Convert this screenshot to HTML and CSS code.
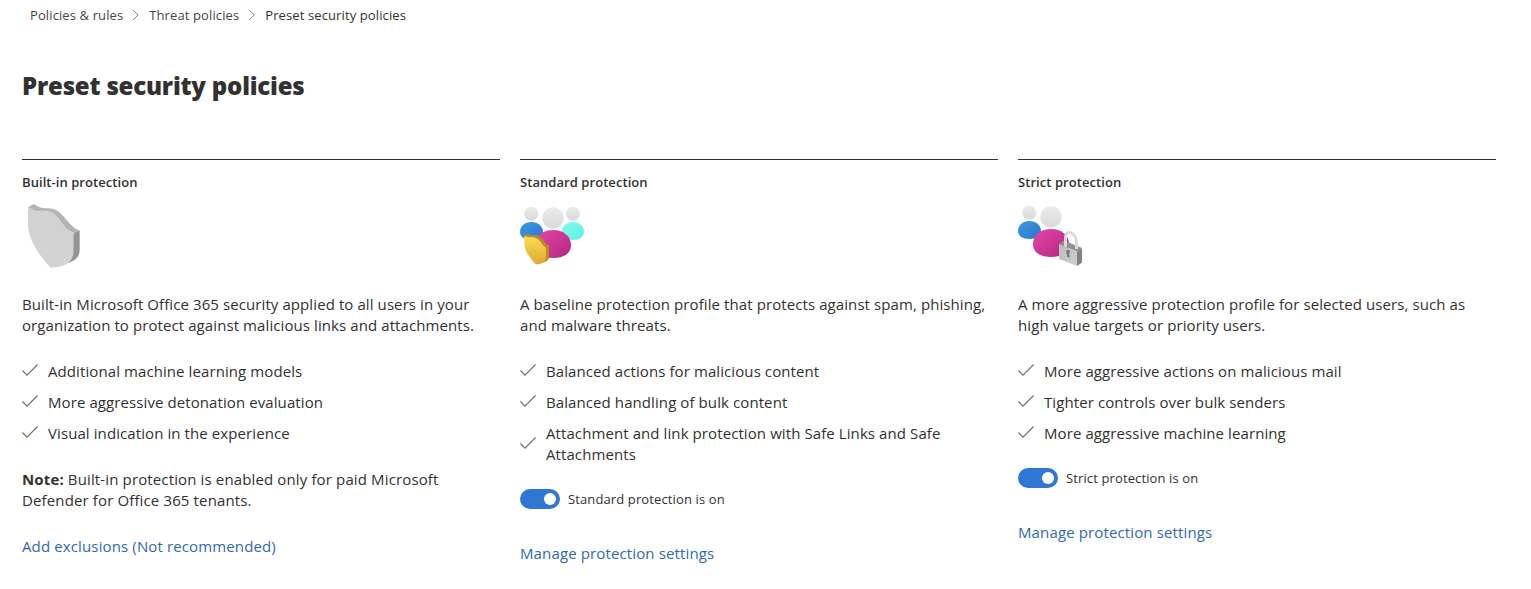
FILE: index.html
```
<!DOCTYPE html>
<html lang="en">
<head>
<meta charset="utf-8">
<title>Preset security policies</title>
<link rel="stylesheet" href="styles.css">
</head>
<body>
<svg class="defs" width="0" height="0" aria-hidden="true">
  <defs>
    <linearGradient id="head" x1="0" y1="0" x2="0" y2="1"><stop offset="0" stop-color="#ebebeb"/><stop offset="1" stop-color="#d9d9d9"/></linearGradient>
    <linearGradient id="blue" x1="0" y1="0" x2="1" y2="1"><stop offset="0" stop-color="#3c9ae4"/><stop offset="1" stop-color="#2b74c9"/></linearGradient>
    <linearGradient id="pink" x1="0" y1="0" x2="1" y2="1"><stop offset="0" stop-color="#e646a6"/><stop offset="1" stop-color="#b02780"/></linearGradient>
    <linearGradient id="teal" x1="0" y1="0" x2="1" y2="1"><stop offset="0" stop-color="#82fbee"/><stop offset="1" stop-color="#5feee0"/></linearGradient>
    <linearGradient id="gold" x1="0" y1="0" x2="0" y2="1"><stop offset="0" stop-color="#fbdf58"/><stop offset="1" stop-color="#e2a733"/></linearGradient>
    <linearGradient id="steel" x1="0" y1="0" x2="1" y2="1"><stop offset="0" stop-color="#bcbcbc"/><stop offset="1" stop-color="#cecece"/></linearGradient>
    <symbol id="check" viewBox="0 0 16 16"><path d="M.4 8.500 5 13.100 15.600 2.500" fill="none" stroke="#5f7656" stroke-width="1.100"/></symbol>
    <symbol id="chevron" viewBox="0 0 8 12"><path d="M1.200 1.200 6.200 6 1.200 10.800" fill="none" stroke="#85827f" stroke-width="1"/></symbol>
  </defs>
</svg>
<nav class="breadcrumb">
  <a>Policies &amp; rules</a>
  <svg class="chevron"><use href="#chevron"/></svg>
  <a>Threat policies</a>
  <svg class="chevron"><use href="#chevron"/></svg>
  <span class="current">Preset security policies</span>
</nav>
<h1 class="title">Preset security policies</h1>
<main class="columns">
  <section class="card">
    <h2 class="card-title">Built-in protection</h2>
    <svg class="picture" viewBox="0 0 64 64">
      <path d="M6 3.300 12 0C16 3 20 4.500 25 4.200 41 3.500 43 20 57.700 26.700L51.500 29 22 12Z" fill="#b4b4b4"/>
      <path d="M51.500 29 57.700 26.500V44C57.700 53 54 56 46 59Z" fill="#949494"/>
      <path d="M6 3.300C10 6.500 15 7.200 20 6.500 38 5 38 23 51.500 29V47C51.500 58 44 63 28.500 63.800 17 51 6 36 6 19Z" fill="#d2d2d2"/>
    </svg>
    <p class="text">Built-in Microsoft Office 365 security applied to all users in your<br>organization to protect against malicious links and attachments.</p>
    <ul class="features">
      <li><svg class="check"><use href="#check"/></svg><span>Additional machine learning models</span></li>
      <li><svg class="check"><use href="#check"/></svg><span>More aggressive detonation evaluation</span></li>
      <li><svg class="check"><use href="#check"/></svg><span>Visual indication in the experience</span></li>
    </ul>
    <p class="text note"><b>Note:</b> Built-in protection is enabled only for paid Microsoft<br>Defender for Office 365 tenants.</p>
    <a class="link">Add exclusions (Not recommended)</a>
  </section>
  <section class="card">
    <h2 class="card-title">Standard protection</h2>
    <svg class="picture" viewBox="0 0 64 64">
      <circle cx="11.300" cy="9.700" r="7" fill="url(#head)"/>
      <circle cx="53" cy="9.700" r="7" fill="url(#head)"/>
      <path d="M0 28C0 22 5 18 11.300 18S23 22 23 28C23 33 18 36 11.500 36S0 33 0 28Z" fill="url(#blue)"/>
      <path d="M41.500 28C41.500 22 47 18 53 18S64 22 64 28C64 33 59 36 53 36S41.500 33 41.500 28Z" fill="url(#teal)"/>
      <circle cx="33" cy="14" r="10.700" fill="url(#head)"/>
      <path d="M15.500 41C15.500 32 23 26 33 26S51 32 51 41C51 50 43 54 33.500 54S15.500 50 15.500 41Z" fill="url(#pink)"/>
      <path d="M4.300 31.500 7 29.700C10 32 14 31 17 31.500 23 33 24 39.500 29 41.700V53C29 57 25 58 18 60Z" fill="#bf8a24"/>
      <path d="M4.300 31.500C7 33.500 10 33.200 13 33.200 20 33.500 21 41 26 43.500V52C26 58 22 60 15.800 60.500 10 54 4.300 47 4.300 39Z" fill="url(#gold)"/>
    </svg>
    <p class="text">A baseline protection profile that protects against spam, phishing,<br>and malware threats.</p>
    <ul class="features">
      <li><svg class="check"><use href="#check"/></svg><span>Balanced actions for malicious content</span></li>
      <li><svg class="check"><use href="#check"/></svg><span>Balanced handling of bulk content</span></li>
      <li><svg class="check"><use href="#check"/></svg><span>Attachment and link protection with Safe Links and Safe<br>Attachments</span></li>
    </ul>
    <div class="toggle-row"><span class="toggle"></span><span class="toggle-label">Standard protection is on</span></div>
    <a class="link">Manage protection settings</a>
  </section>
  <section class="card">
    <h2 class="card-title">Strict protection</h2>
    <svg class="picture" viewBox="0 0 64 64">
      <circle cx="11.300" cy="8.700" r="7" fill="url(#head)"/>
      <path d="M0 27C0 21 5 17 11.300 17S23 21 23 27C23 32 18 35 11.500 35S0 32 0 27Z" fill="url(#blue)"/>
      <circle cx="33" cy="13" r="10.700" fill="url(#head)"/>
      <path d="M15 40C15 31 23 25 33 25S51 31 51 40C51 49 43 53 33 53S15 49 15 40Z" fill="url(#pink)"/>
      <path d="M41 40 46 36.500 64 44 59 47.500Z" fill="#929292"/>
      <path d="M47.500 43V35C47.500 30 49 28.500 51 28.500 55 28.500 58.500 33 58.500 38V45" fill="none" stroke="#dadada" stroke-width="3"/>
      <path d="M41 40 59 47.500V62L41 55Z" fill="url(#steel)"/>
      <path d="M59 47.500 64 44V58.500L59 62Z" fill="#818181"/>
      <ellipse cx="50" cy="48" rx="1.800" ry="2.200" fill="#777"/>
      <path d="M49.300 49H50.900L51.800 53.800 48.900 52.600Z" fill="#777"/>
    </svg>
    <p class="text">A more aggressive protection profile for selected users, such as<br>high value targets or priority users.</p>
    <ul class="features">
      <li><svg class="check"><use href="#check"/></svg><span>More aggressive actions on malicious mail</span></li>
      <li><svg class="check"><use href="#check"/></svg><span>Tighter controls over bulk senders</span></li>
      <li><svg class="check"><use href="#check"/></svg><span>More aggressive machine learning</span></li>
    </ul>
    <div class="toggle-row"><span class="toggle"></span><span class="toggle-label">Strict protection is on</span></div>
    <a class="link">Manage protection settings</a>
  </section>
</main>
</body>
</html>
```
FILE: styles.css
```
* { box-sizing: border-box; }
body {
  margin: 0;
  background: #fff;
  color: #323130;
  font-family: "Open Sans", "Noto Sans", sans-serif;
  font-size: 15px;
  line-height: 21px;
  letter-spacing: .09px;
  white-space: nowrap;
}
.defs { display: block; }
h1, h2, p, ul { margin: 0; padding: 0; }
.breadcrumb {
  display: flex;
  align-items: center;
  height: 20px;
  margin-top: 5px;
  padding-left: 30px;
  font-size: 13px;
  line-height: 20px;
  letter-spacing: .11px;
  color: #484644;
}
.breadcrumb .current { color: #323130; }
.chevron { width: 8px; height: 12px; margin: 0 9px; }
.title {
  margin: 45px 0 0 22px;
  font-size: 24px;
  line-height: 32px;
  font-weight: 800;
  letter-spacing: -.2px;
}
.columns {
  display: grid;
  grid-template-columns: repeat(3, 478px);
  column-gap: 20px;
  margin: 57px 0 0 22px;
}
.card {
  display: flex;
  flex-direction: column;
  align-items: flex-start;
  border-top: 1px solid #323130;
}
.card-title {
  margin-top: 12px;
  font-size: 13px;
  line-height: 20px;
  font-weight: 600;
  letter-spacing: .06px;
}
.picture { width: 64px; height: 64px; margin: 12px 0 26px; }
.features {
  display: flex;
  flex-direction: column;
  gap: 10px;
  margin-top: 25px;
  list-style: none;
}
.features li { display: flex; align-items: center; gap: 10px; }
.check { flex: none; width: 16px; height: 16px; margin-top: -3px; }
.note { margin-top: 25px; letter-spacing: .135px; }
.toggle-row {
  display: flex;
  align-items: center;
  gap: 8px;
  height: 20px;
  margin: 24px 0 9px;
  font-size: 13px;
  line-height: 20px;
  letter-spacing: .12px;
}
.toggle {
  display: flex;
  align-items: center;
  justify-content: flex-end;
  width: 40px;
  height: 20px;
  padding: 0 4px;
  border-radius: 10px;
  background: #3077d3;
}
.toggle::after {
  content: "";
  width: 12px;
  height: 12px;
  border-radius: 50%;
  background: #fff;
}
.link { margin-top: 25px; color: #2f68b7; letter-spacing: .13px; }
```
